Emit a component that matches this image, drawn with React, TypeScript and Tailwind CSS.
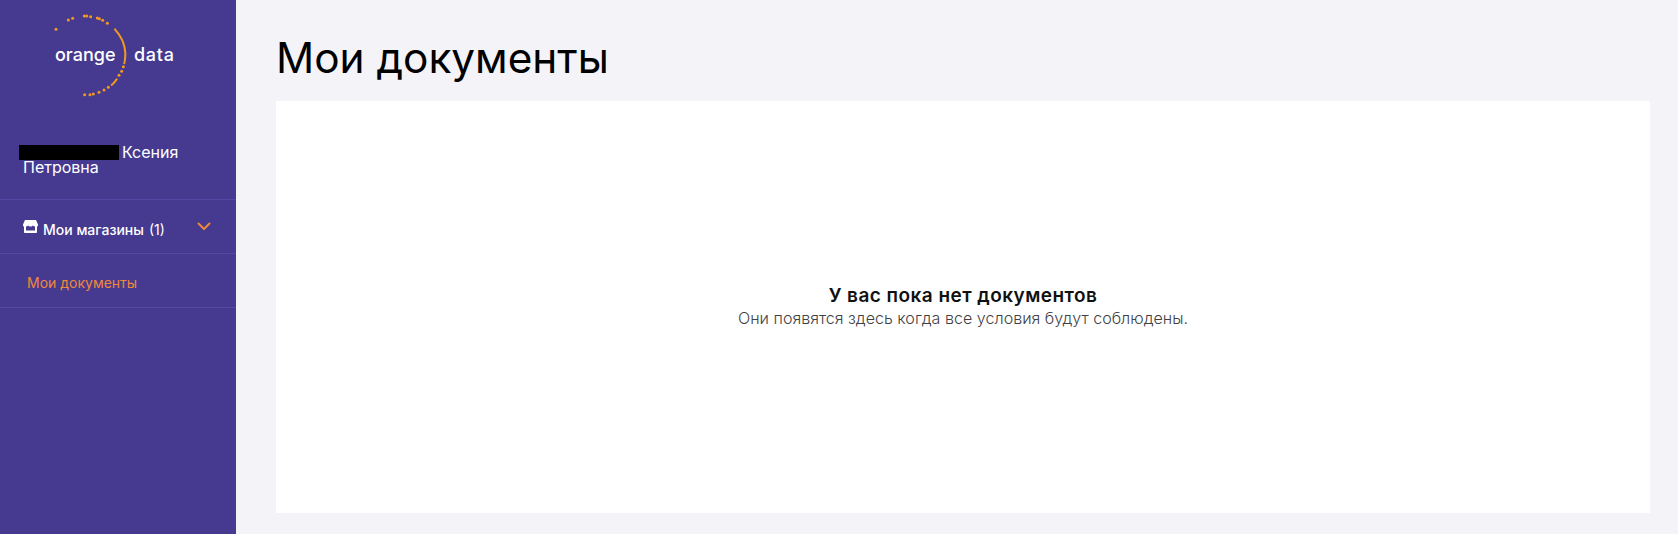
const arcDots: [number, number, number][] = [
  [168,88,3],[205,60,3],[218,55,3],[253,48,3],[260,48,3],[272,50,3],[292,54,3],[298,56,3],[308,61,3],[322,70,3],
  [370,200,3],[365,214,3],[357,226,3],[325,262,3],[312,270,3],[297,277,3],[280,282,3],[270,284,3],[254,284,3],
];

function Logo() {
  return (
    <div className="relative h-[110px] shrink-0">
      <svg className="absolute left-0 top-0" width="236" height="110" viewBox="0 0 708 330" fill="none">
        {arcDots.map(([x, y, r]) => (
          <circle key={`${x}-${y}`} cx={x} cy={y} r={r + 1.5} fill="#f39a1e" />
        ))}
        <path d="M345 88C362 107 375 130 376 160C376 172 375 180 373 190" stroke="#f39a1e" strokeWidth="6" strokeLinecap="round" strokeDasharray="40 3 60 3" />
        <path d="M350 238C345 245 340 251 335 255" stroke="#f39a1e" strokeWidth="6" strokeLinecap="round" />
      </svg>
      <div className="absolute left-[55px] top-[43px] text-[18px] leading-[24px] font-medium text-white">orange</div>
      <div className="absolute left-[134px] top-[43px] text-[18px] leading-[24px] font-medium tracking-[0.7px] text-white">data</div>
    </div>
  );
}

function StoreIcon() {
  return (
    <svg width="15" height="13" viewBox="0 0 15 13" className="shrink-0">
      <path d="M2 0H13L15 4.5V5.5C15 6 14.5 6.5 14 6.5V12C14 12.6 13.6 13 13 13H2C1.4 13 1 12.6 1 12V6.5C0.5 6.5 0 6 0 5.5V4.5Z" fill="#fff" />
      <path d="M3 6.5C3.8 6.5 4.5 6 5 5.5C5.5 6 6.3 6.5 7.5 6.5C8.7 6.5 9.5 6 10 5.5C10.5 6 11.2 6.5 12 6.5V10.5H3Z" fill="#463a90" />
    </svg>
  );
}

export default function App() {
  return (
    <div className="flex h-[534px] w-full overflow-hidden bg-[#f3f3f8] font-['Inter','Noto_Sans',sans-serif]">
      <aside className="flex w-[236px] shrink-0 flex-col bg-[#463a90] text-white">
        <Logo />
        <div className="h-[89.5px] border-b border-[#5547a5] pl-[23px] pr-[40px] pt-[35px] text-[16px] leading-[14px]">
          <span className="-ml-[4px] mr-[3px] inline-block h-[15px] w-[100px] bg-black align-[-2px]"></span>
          Ксения Петровна
        </div>
        <div className="flex h-[54px] items-center border-b border-[#5547a5] pl-[23px] pr-[25px]">
          <div className="mr-[5px] mt-[1px]"><StoreIcon /></div>
          <span className="mt-[6px] text-[14px] font-medium">Мои магазины</span>
          <span className="ml-[5px] mt-[6px] text-[14px]">(1)</span>
          <svg className="mb-[1px] ml-auto" width="14" height="8" viewBox="0 0 14 8" fill="none">
            <path d="M1 1L7 7L13 1" stroke="#f0883a" strokeWidth="2" />
          </svg>
        </div>
        <div className="flex h-[54px] items-center border-b border-[#5547a5] pl-[27px] pt-[5px] text-[14px] text-[#f0883a]">
          Мои документы
        </div>
      </aside>
      <main className="flex min-w-0 flex-1 flex-col pb-[21px] pl-[40px] pr-[28px]">
        <h1 className="flex h-[101px] shrink-0 items-center pt-[14px] text-[42.3px] font-normal text-black">Мои документы</h1>
        <section className="flex flex-1 flex-col items-center justify-center bg-white pb-[1px]">
          <div className="text-[19px] leading-[23px] font-semibold tracking-[0.45px] text-[#111]">У вас пока нет документов</div>
          <div className="text-[16.1px] leading-[22px] font-light text-[#3f3f46]">Они появятся здесь когда все условия будут соблюдены.</div>
        </section>
      </main>
    </div>
  );
}
